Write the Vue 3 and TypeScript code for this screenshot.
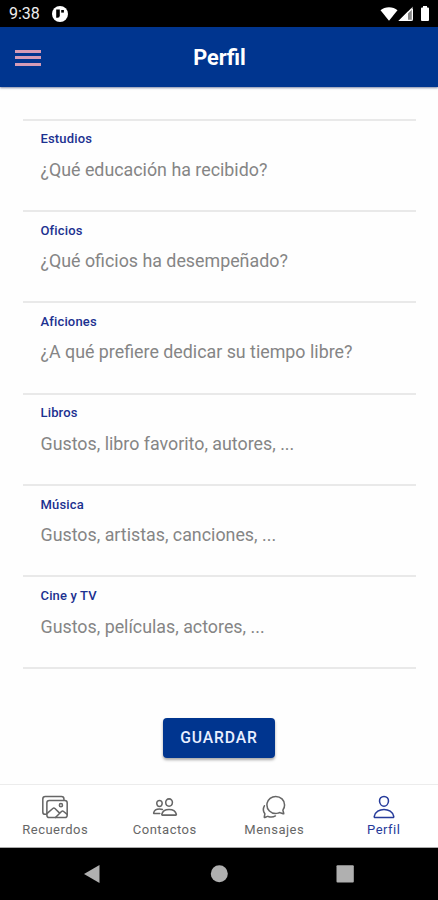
<script setup lang="ts">
interface Field {
  label: string
  placeholder: string
}

const fields: Field[] = [
  { label: 'Estudios', placeholder: '¿Qué educación ha recibido?' },
  { label: 'Oficios', placeholder: '¿Qué oficios ha desempeñado?' },
  { label: 'Aficiones', placeholder: '¿A qué prefiere dedicar su tiempo libre?' },
  { label: 'Libros', placeholder: 'Gustos, libro favorito, autores, ...' },
  { label: 'Música', placeholder: 'Gustos, artistas, canciones, ...' },
  { label: 'Cine y TV', placeholder: 'Gustos, películas, actores, ...' },
]
</script>

<template>
  <div class="screen">
    <div class="status">
      <span class="clock">9:38</span>
      <svg class="notice" viewBox="0 0 16 16">
        <circle cx="8" cy="8" r="8" fill="#fff" />
        <path d="M4.200 3.600h3.600v6a2.200 2.200 0 0 1-2.200 2.200H4.200z" fill="#000" />
        <path d="M9.200 4h2.700v2.600H9.200z" fill="#000" />
      </svg>
      <svg class="signals" viewBox="0 0 52 18">
        <path d="M.500 5.200C4.900 1.200 13.100 1.200 17.500 5.200L9 15.800z" fill="#fff" />
        <path d="M33 1.500V16H18.500z" fill="#888" />
        <path d="M28 6.500V16h-9.500z" fill="#fff" />
        <path d="M33 1.500V16h-1.200V2.700zM18.500 16H33v-1.300H19.800zM33 1.500 18.500 16h2L33 3.500z" fill="#fff" />
        <path d="M42 2.400h1V1h4v1.400h1q1 0 1 1V15q0 1-1 1h-6q-1 0-1-1V3.400q0-1 1-1z" fill="#fff" />
      </svg>
    </div>

    <header class="toolbar">
      <button class="menu" aria-label="Menú"><i></i><i></i><i></i></button>
      <h1>Perfil</h1>
    </header>

    <main class="content">
      <div class="list">
        <div v-for="field in fields" :key="field.label" class="item">
          <label>{{ field.label }}</label>
          <p>{{ field.placeholder }}</p>
        </div>
      </div>
      <button class="save">GUARDAR</button>
    </main>

    <nav class="tabs">
      <div class="tab">
        <svg viewBox="0 0 512 512">
          <path d="M432 112V96a48.140 48.140 0 0 0-48-48H64a48.140 48.140 0 0 0-48 48v256a48.140 48.140 0 0 0 48 48h16" />
          <rect x="96" y="128" width="400" height="336" rx="45.990" />
          <ellipse cx="372.920" cy="219.640" rx="30.770" ry="30.550" />
          <path d="M342.150 372.170 255 285.780a30.930 30.930 0 0 0-42.180-1.210L96 387.640M265.230 464l118.590-117.730a31 31 0 0 1 41.460-1.870L496 402.910" />
        </svg>
        <span>Recuerdos</span>
      </div>
      <div class="tab">
        <svg viewBox="0 0 512 512">
          <path d="M402 168c-2.930 40.670-33.100 72-66 72s-63.120-31.320-66-72c-3-42.310 26.370-72 66-72s69 30.460 66 72zM336 304c-65.170 0-127.840 32.370-143.540 95.410-2.080 8.340 3.150 16.590 11.720 16.590h263.650c8.570 0 13.770-8.250 11.720-16.590C463.850 335.360 401.180 304 336 304zM200 185.940c-2.340 32.480-26.720 58.060-53 58.060s-50.700-25.570-53-58.060C91.610 152.150 115.340 128 147 128s55.390 24.770 53 57.940zM206 306c-18.050-8.270-37.930-11.450-59-11.450-52 0-102.100 25.850-114.650 76.200-1.650 6.660 2.530 13.250 9.370 13.250H154" />
        </svg>
        <span>Contactos</span>
      </div>
      <div class="tab">
        <svg viewBox="0 0 512 512">
          <path d="M431 320.600c-1-3.600 1.200-8.600 3.300-12.200a33.680 33.680 0 0 1 2.100-3.100A162 162 0 0 0 464 215c.300-92.200-77.500-167-173.700-167-83.900 0-153.900 57.100-170.300 132.900a160.700 160.700 0 0 0-3.700 34.200c0 92.300 74.800 169.100 171 169.100 15.300 0 35.900-4.600 47.200-7.700s22.500-7.200 25.400-8.300a26.440 26.440 0 0 1 9.300-1.700 26 26 0 0 1 10.100 2l56.700 20.100a13.520 13.520 0 0 0 3.900 1 8 8 0 0 0 8-8 12.850 12.850 0 0 0-.500-2.700z" />
          <path d="M66.460 232a146.230 146.230 0 0 0 6.390 152.670c2.310 3.490 3.610 6.190 3.210 8s-11.930 61.870-11.930 61.870a8 8 0 0 0 2.710 7.680A8.170 8.170 0 0 0 72 464a7.260 7.260 0 0 0 2.910-.600l56.210-22a15.700 15.700 0 0 1 12 .200c18.940 7.380 39.880 12 60.830 12A159.210 159.210 0 0 0 284 432.110" />
        </svg>
        <span>Mensajes</span>
      </div>
      <div class="tab active">
        <svg viewBox="0 0 512 512">
          <path d="M344 144c-3.920 52.870-44 96-88 96s-84.150-43.120-88-96c-4-55 35-96 88-96s92 42 88 96zM256 304c-87 0-175.300 48-191.640 138.600C62.390 453.520 68.570 464 80 464h352c11.440 0 17.620-10.480 15.650-21.400C431.300 352 343 304 256 304z" />
        </svg>
        <span>Perfil</span>
      </div>
    </nav>

    <div class="system">
      <svg viewBox="0 0 438 52">
        <path d="M84 26 99.500 17v18z" />
        <circle cx="219.300" cy="25.700" r="8.500" />
        <rect x="336.500" y="17.300" width="17.300" height="17.300" rx="1" />
      </svg>
    </div>
  </div>
</template>

<style>
body {
  margin: 0;
  background: #fff;
}
</style>

<style scoped>
.screen {
  display: flex;
  flex-direction: column;
  width: 438px;
  height: 900px;
  overflow: hidden;
  background: #fefefe;
  font-family: Roboto, "Liberation Sans", sans-serif;
}

.status {
  display: flex;
  align-items: center;
  box-sizing: border-box;
  flex: 0 0 27px;
  padding: 1px 6px 0 9px;
  background: #000;
  color: #eee;
}

.clock {
  width: 43px;
  font-size: 16px;
  line-height: 26px;
}

.notice {
  width: 16px;
  height: 16px;
}

.signals {
  width: 52px;
  height: 18px;
  margin-left: auto;
}

.toolbar {
  display: grid;
  grid-template-columns: 54px 1fr 54px;
  align-items: center;
  flex: 0 0 60px;
  z-index: 1;
  background: #00358f;
  box-shadow: 0 1px 2px rgba(0, 20, 80, 0.5);
}

.menu {
  display: flex;
  flex-direction: column;
  gap: 4px;
  width: 26px;
  margin: 1px 0 0 15px;
  padding: 0;
  border: 0;
  background: none;
}

.menu i {
  height: 3px;
  background: #d59bb6;
}

.menu i + i {
  margin-top: -0.500px;
}

h1 {
  margin: 1px 0 0 1px;
  color: #fff;
  font-size: 21.700px;
  font-weight: 700;
  line-height: 28px;
  text-align: center;
}

.content {
  display: flex;
  flex-direction: column;
  align-items: center;
  flex: 1;
  min-height: 0;
  padding-top: 31.500px;
}

.list {
  align-self: stretch;
  margin: 0 22px 0 23px;
  border-top: 2px solid #e9e9e9;
}

.item {
  box-sizing: border-box;
  height: 91.400px;
  padding: 9.700px 0 0 17.500px;
  border-bottom: 2px solid #e9e9e9;
}

label {
  display: block;
  color: #1c3190;
  font-size: 13px;
  font-weight: 500;
  line-height: 18px;
  letter-spacing: 0.150px;
}

p {
  margin: 9.500px 0 0;
  color: #858585;
  font-size: 17.830px;
  line-height: 24px;
  white-space: nowrap;
}

.save {
  width: 112px;
  height: 40px;
  margin-top: 49px;
  padding: 0;
  border: 0;
  border-radius: 4px;
  background: #00358f;
  box-shadow: 0 2px 3px rgba(0, 0, 0, 0.35);
  color: #e9efff;
  font: 500 15.700px/40px Roboto, "Liberation Sans", sans-serif;
  letter-spacing: 0.900px;
}

.tabs {
  display: grid;
  grid-template-columns: repeat(4, 1fr);
  box-sizing: border-box;
  flex: 0 0 64px;
  border-top: 1px solid #ececec;
  border-bottom: 1px solid #aaa;
  background: #fff;
}

.tab {
  display: flex;
  flex-direction: column;
  align-items: center;
  gap: 2px;
  padding: 9px 0 0 1px;
  color: #666;
  font-size: 13px;
  line-height: 16px;
  letter-spacing: 0.500px;
}

.tab svg {
  width: 26px;
  height: 26px;
  fill: none;
  stroke: currentColor;
  stroke-width: 30;
  stroke-linecap: round;
  stroke-linejoin: round;
}

.active {
  color: #263b9b;
}

.system {
  flex: 0 0 52px;
  background: #000;
}

.system svg {
  display: block;
  width: 438px;
  height: 52px;
  fill: #b0b0b0;
}
</style>
